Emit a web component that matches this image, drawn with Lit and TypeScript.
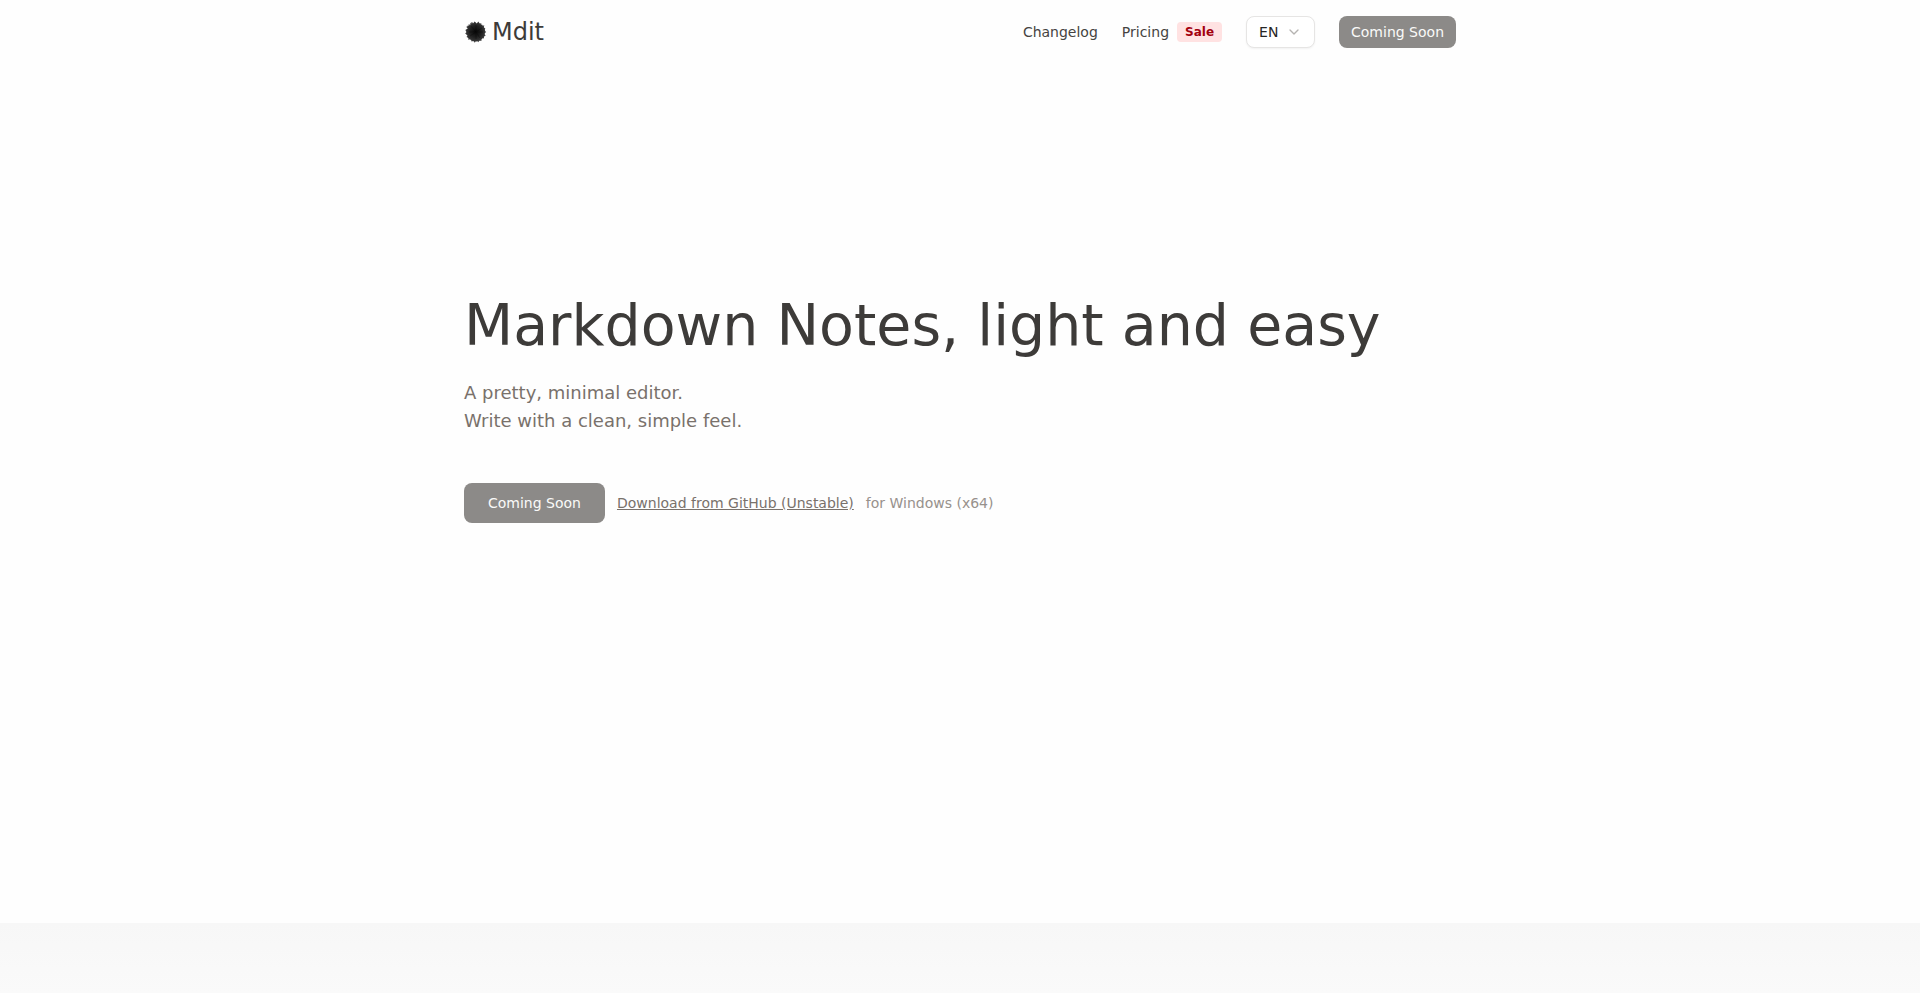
import { LitElement, html, css, svg } from "lit";
import { customElement, state } from "lit/decorators.js";

@customElement("mdit-logo")
class MditLogo extends LitElement {
  static styles = css`
    :host { display: block; width: 24px; height: 24px; }
    svg { display: block; width: 100%; height: 100%; }
  `;

  // Outer fringe of the pompom: alternating long and short tufts.
  private tufts(count: number, outer: number, inner: number, seed: number) {
    const points: string[] = [];
    for (let i = 0; i < count * 2; i++) {
      const angle = (i / (count * 2)) * Math.PI * 2;
      const jitter = Math.sin(i * seed) * 0.7;
      const r = (i % 2 ? inner : outer) + jitter;
      points.push(`${(11.7 + Math.cos(angle) * r).toFixed(2)},${(12 + Math.sin(angle) * r).toFixed(2)}`);
    }
    return points.join(" ");
  }

  render() {
    return html`<svg viewBox="0 0 24 24" aria-hidden="true">
      ${svg`
        <defs>
          <radialGradient id="fur">
            <stop offset="0" stop-color="#080808" />
            <stop offset="0.55" stop-color="#1e1e1e" />
            <stop offset="1" stop-color="#3a3a3a" />
          </radialGradient>
        </defs>
        <polygon points=${this.tufts(19, 10.6, 8.6, 4.7)} fill="#444444" />
        <polygon points=${this.tufts(15, 9.9, 8.9, 2.9)} fill="url(#fur)" />
        <path d="M12 12 7 6M12 12l6-4M12 12l4 6M12 12l-6 4M12 12V5M12 12h7M12 12v7M12 12H5"
          stroke="#050505" stroke-width="0.8" opacity="0.4" />
      `}
    </svg>`;
  }
}

@customElement("app-root")
class AppRoot extends LitElement {
  static styles = css`
    :host {
      display: flex;
      flex-direction: column;
      min-height: 100vh;
      background: #fefefe;
      color: #3d3b39;
      font: 14px/20px "DejaVu Sans", sans-serif;
    }
    * { box-sizing: border-box; }
    a { color: inherit; text-decoration: none; }
    button, select { font: inherit; margin: 0; }
    .container {
      width: 100%;
      max-width: 1024px;
      margin: 0 auto;
      padding: 0 16px;
    }
    .header {
      display: flex;
      align-items: center;
      justify-content: space-between;
      height: 64px;
    }
    .brand {
      display: flex;
      align-items: center;
      gap: 4px;
      font-size: 24px;
      line-height: 32px;
    }
    .nav, .pricing { display: flex; align-items: center; }
    .nav { gap: 24px; color: #454341; }
    .pricing { gap: 8px; }
    .badge {
      padding: 2px 8px;
      border-radius: 4px;
      background: #ffe2e2;
      color: #a3000f;
      font-size: 12px;
      font-weight: 700;
      line-height: 16px;
    }
    .language { display: grid; align-items: center; }
    .language > * { grid-area: 1 / 1; }
    .select {
      appearance: none;
      width: 69px;
      height: 32px;
      padding: 0 32px 0 12px;
      border: 1px solid #e6e5e4;
      border-radius: 8px;
      background: #fff;
      box-shadow: 0 1px 2px rgba(0, 0, 0, 0.05);
      color: #262524;
    }
    .chevron {
      justify-self: end;
      width: 16px;
      height: 16px;
      margin-right: 13px;
      pointer-events: none;
    }
    .button {
      height: 32px;
      padding: 0 12px;
      border: 0;
      border-radius: 8px;
      background: #8c8a88;
      color: #fafaf9;
      white-space: nowrap;
    }
    .button.large { height: 40px; padding: 0 24px; }
    .hero {
      display: flex;
      flex-direction: column;
      justify-content: center;
      min-height: calc(100vh - 134px);
      padding-bottom: 169px;
    }
    .title {
      margin: 0 0 24px;
      font-size: 57px;
      font-weight: 400;
      line-height: 60px;
    }
    .lead {
      margin: 0 0 48px;
      color: #79716b;
      font-size: 18px;
      line-height: 28px;
    }
    .actions {
      display: flex;
      flex-wrap: wrap;
      align-items: center;
      gap: 12px;
    }
    .download { color: #79716b; text-decoration: underline; }
    .platform { color: #97918c; }
    .features {
      flex: 1;
      background: linear-gradient(#f7f7f7, #fafafa);
    }
  `;

  @state() private language = "EN";

  private onLanguage(event: Event) {
    this.language = (event.target as HTMLSelectElement).value;
  }

  render() {
    return html`
      <header class="container header">
        <a class="brand" href="#"><mdit-logo></mdit-logo><span>Mdit</span></a>
        <nav class="nav">
          <a href="#changelog">Changelog</a>
          <a class="pricing" href="#pricing">Pricing <span class="badge">Sale</span></a>
          <label class="language">
            <select class="select" aria-label="Language" .value=${this.language} @change=${this.onLanguage}>
              <option value="EN">EN</option>
            </select>
            <svg class="chevron" viewBox="0 0 24 24" fill="none" stroke="#b5b3b1" stroke-width="2"
              stroke-linecap="round" stroke-linejoin="round" aria-hidden="true">
              <path d="m6 9 6 6 6-6" />
            </svg>
          </label>
          <button class="button" type="button">Coming Soon</button>
        </nav>
      </header>
      <main class="container">
        <section class="hero">
          <h1 class="title">Markdown Notes, light and easy</h1>
          <p class="lead">A pretty, minimal editor.<br />Write with a clean, simple feel.</p>
          <div class="actions">
            <button class="button large" type="button">Coming Soon</button>
            <a class="download" href="#download">Download from GitHub (Unstable)</a>
            <span class="platform">for Windows (x64)</span>
          </div>
        </section>
      </main>
      <section class="features"></section>
    `;
  }
}
